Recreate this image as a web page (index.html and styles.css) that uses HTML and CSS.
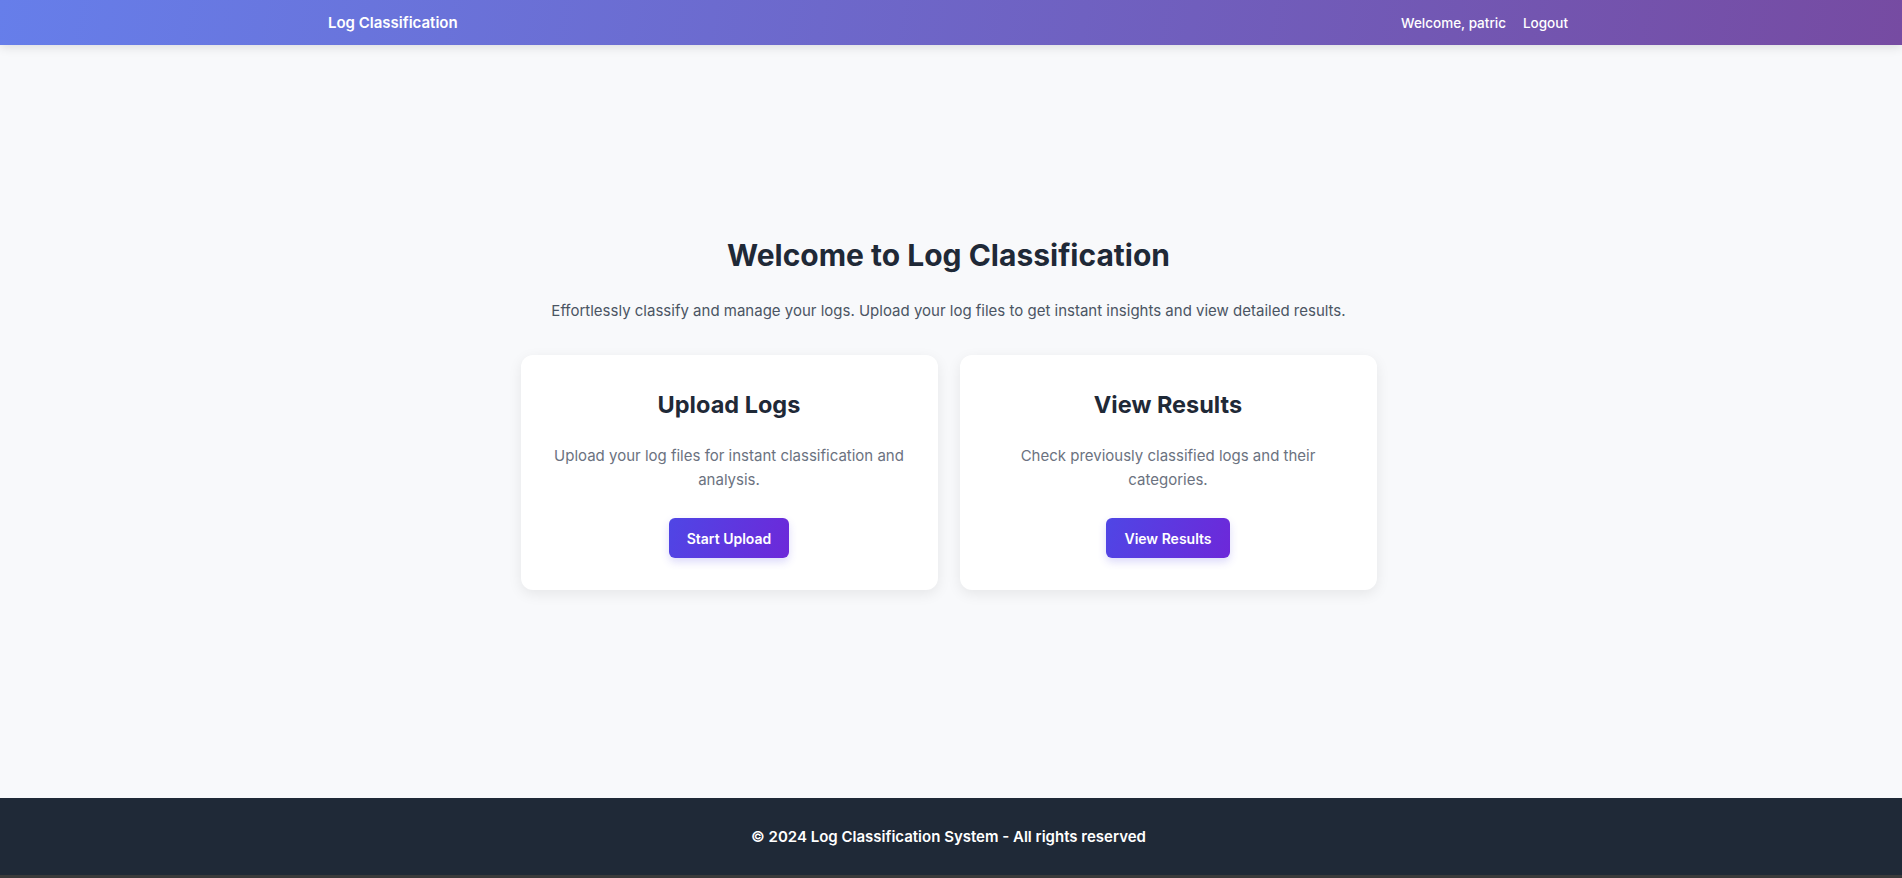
FILE: index.html
```html
<!DOCTYPE html>
<html lang="en">
<head>
<meta charset="utf-8">
<title>Log Classification</title>
<link rel="stylesheet" href="styles.css">
</head>
<body>
<div class="page">
  <header class="topbar">
    <div class="topbar-inner">
      <a class="brand" href="#">Log Classification</a>
      <nav class="nav">
        <span class="nav-item">Welcome, patric</span>
        <a class="nav-item" href="#">Logout</a>
      </nav>
    </div>
  </header>
  <main class="main">
    <section class="hero">
      <h1 class="hero-title">Welcome to Log Classification</h1>
      <p class="hero-sub">Effortlessly classify and manage your logs. Upload your log files to get instant insights and view detailed results.</p>
      <div class="cards">
        <div class="card">
          <h2 class="card-title">Upload Logs</h2>
          <p class="card-text">Upload your log files for instant classification and analysis.</p>
          <a class="btn" href="#">Start Upload</a>
        </div>
        <div class="card">
          <h2 class="card-title">View Results</h2>
          <p class="card-text">Check previously classified logs and their categories.</p>
          <a class="btn" href="#">View Results</a>
        </div>
      </div>
    </section>
  </main>
  <footer class="footer">
    <p class="footer-text">© 2024 Log Classification System - All rights reserved</p>
  </footer>
</div>
</body>
</html>
```
FILE: styles.css
```css
* { box-sizing: border-box; }
html { background: #3a3a3a; }
body {
  margin: 0;
  font-family: Inter, "Noto Sans", "Liberation Sans", sans-serif;
  background: #3a3a3a;
}
.page {
  min-height: 875px;
  display: flex;
  flex-direction: column;
  background: #f8f9fb;
}
.topbar {
  height: 45px;
  background: linear-gradient(100deg, #667eea 0%, #764ba2 100%);
  box-shadow: 0 2px 10px rgba(0, 0, 0, 0.12);
  position: relative;
  z-index: 2;
  padding-right: 6px;
}
.topbar-inner {
  max-width: 1280px;
  margin: 0 auto;
  padding: 0 20px;
  height: 100%;
  display: flex;
  align-items: center;
  justify-content: space-between;
}
.brand {
  color: #fff;
  text-decoration: none;
  font-weight: 600;
  font-size: 15px;
}
.nav {
  display: flex;
  gap: 17px;
}
.nav-item {
  color: #fff;
  text-decoration: none;
  font-size: 13.5px;
  font-weight: 500;
}
.main {
  flex: 1;
  display: flex;
  align-items: center;
  justify-content: center;
  padding: 0 5px 16px 0;
}
.hero {
  text-align: center;
  width: 856px;
}
.hero-title {
  margin: 0;
  font-size: 30px;
  line-height: 36px;
  font-weight: 700;
  color: #1f2937;
}
.hero-sub {
  margin: 26px 0 0;
  font-size: 15px;
  line-height: 24px;
  color: #4b5563;
}
.cards {
  margin-top: 32px;
  display: grid;
  grid-template-columns: 1fr 1fr;
  gap: 22px;
}
.card {
  background: #fff;
  border-radius: 12px;
  box-shadow: 0 4px 14px rgba(0, 0, 0, 0.08);
  padding: 34px 32px 32px;
  display: flex;
  flex-direction: column;
  align-items: center;
}
.card-title {
  margin: 0;
  font-size: 23.5px;
  line-height: 32px;
  font-weight: 700;
  color: #1f2937;
}
.card-text {
  margin: 23px 0 26px;
  font-size: 15px;
  line-height: 24px;
  color: #6b7280;
}
.btn {
  display: inline-flex;
  align-items: center;
  justify-content: center;
  height: 40px;
  padding: 0 18px;
  border-radius: 6px;
  background: linear-gradient(110deg, #4f46e5 0%, #6d28d9 100%);
  color: #fff;
  text-decoration: none;
  font-size: 14px;
  font-weight: 600;
  box-shadow: 0 4px 8px rgba(79, 70, 229, 0.2);
}
.footer {
  background: #1f2937;
  height: 77px;
  display: flex;
  align-items: center;
  justify-content: center;
  padding-right: 5px;
}
.footer-text {
  margin: 0;
  color: #fff;
  font-size: 15px;
  font-weight: 600;
}
```
